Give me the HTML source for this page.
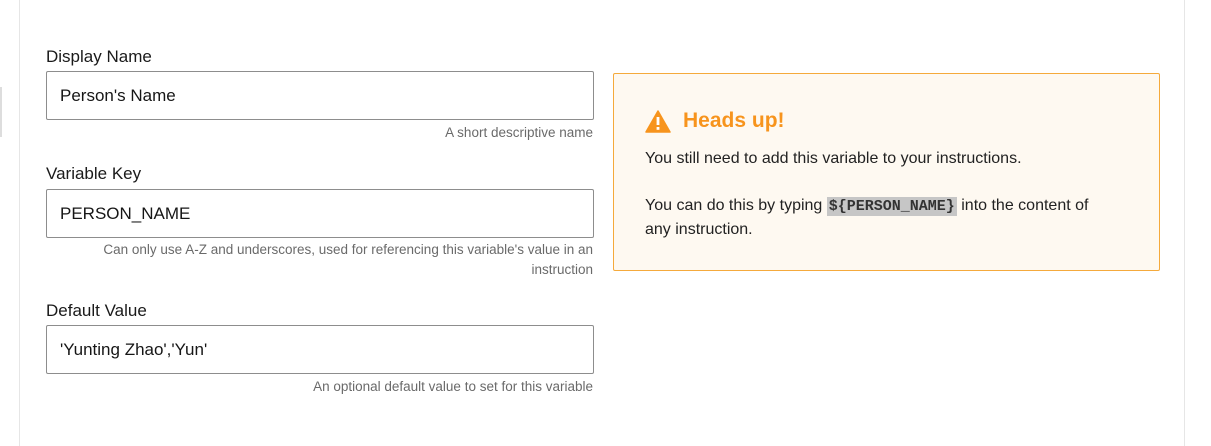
<!DOCTYPE html>
<html><head><style>
body{margin:0;width:1211px;height:446px;background:#fff;font-family:"Liberation Sans",sans-serif;color:#222;position:relative;overflow:hidden}
.vl{position:absolute;top:0;bottom:0;width:1px;background:#e6e6e6}
.lbl{position:absolute;left:46px;font-size:17px;color:#1a1a1a}
.inp{position:absolute;left:46px;width:548px;height:49px;border:1px solid #8d8d8d;border-radius:2px;box-sizing:border-box;font-size:17px;padding-left:13px;line-height:47px;color:#161616}
.hint{position:absolute;right:618px;font-size:13.5px;color:#6a6a6a;text-align:right;line-height:20px;white-space:nowrap}
.alert{position:absolute;left:613px;top:73px;width:547px;height:198px;box-sizing:border-box;border:1px solid #f5aa3c;border-radius:2px;background:#fef9f1}
.alert h3{position:absolute;left:69px;top:35px;margin:0;font-size:21px;color:#f7941d;font-weight:bold}
.alert p{position:absolute;left:31px;margin:0;font-size:16px;color:#222;line-height:23px;width:500px}
code{font-family:"Liberation Mono",monospace;font-weight:bold;background:#c6c6c6;color:#333;font-size:15px;padding:1px 2px}
</style></head><body>
<div class="vl" style="left:19px"></div>
<div class="vl" style="left:1184px"></div>
<div style="position:absolute;left:0;top:87px;width:2px;height:50px;background:#ddd"></div>

<div class="lbl" style="top:47px">Display Name</div>
<div class="inp" style="top:71px">Person's Name</div>
<div class="hint" style="top:123px">A short descriptive name</div>

<div class="lbl" style="top:164px">Variable Key</div>
<div class="inp" style="top:189px">PERSON_NAME</div>
<div class="hint" style="top:240px">Can only use A-Z and underscores, used for referencing this variable's value in an<br>instruction</div>

<div class="lbl" style="top:301px">Default Value</div>
<div class="inp" style="top:325px">'Yunting Zhao','Yun'</div>
<div class="hint" style="top:377px">An optional default value to set for this variable</div>

<div class="alert">
<svg style="position:absolute;left:31px;top:36px" width="26" height="23" viewBox="0 0 26 23"><path d="M13 1 L25 22 L1 22 Z" fill="#f7941d" stroke="#f7941d" stroke-width="1.5" stroke-linejoin="round"/><rect x="11.6" y="7" width="2.8" height="8" fill="#fff"/><rect x="11.6" y="17" width="2.8" height="2.8" fill="#fff"/></svg>
<h3>Heads up!</h3>
<p style="top:73px">You still need to add this variable to your instructions.</p>
<p style="top:120px">You can do this by typing <code>${PERSON_NAME}</code> into the content of<br>any instruction.</p>
</div>
</body></html>
